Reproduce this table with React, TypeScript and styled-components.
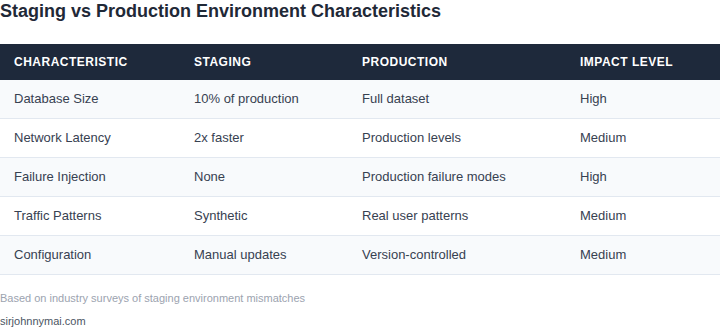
import React from "react";
import styled, { createGlobalStyle } from "styled-components";

const GlobalStyle = createGlobalStyle`
  body {
    margin: 0;
    background: #ffffff;
    font-family: "Liberation Sans", Arial, sans-serif;
  }
`;

const rows = [
  ["Database Size", "10% of production", "Full dataset", "High"],
  ["Network Latency", "2x faster", "Production levels", "Medium"],
  ["Failure Injection", "None", "Production failure modes", "High"],
  ["Traffic Patterns", "Synthetic", "Real user patterns", "Medium"],
  ["Configuration", "Manual updates", "Version-controlled", "Medium"],
];

const columns = [
  { label: "Characteristic", width: 180 },
  { label: "Staging", width: 168 },
  { label: "Production", width: 218 },
  { label: "Impact Level", width: 154 },
];

export default function App() {
  return (
    <>
      <GlobalStyle />
      <Wrapper>
        <Title>Staging vs Production Environment Characteristics</Title>
        <Table>
          <colgroup>
            {columns.map((c) => (
              <col key={c.label} style={{ width: c.width }} />
            ))}
          </colgroup>
          <thead>
            <tr>
              {columns.map((c) => (
                <Th key={c.label}>{c.label}</Th>
              ))}
            </tr>
          </thead>
          <tbody>
            {rows.map((row, i) => (
              <Tr key={row[0]} $alt={i % 2 === 0}>
                {row.map((cell, j) => (
                  <Td key={j}>{cell}</Td>
                ))}
              </Tr>
            ))}
          </tbody>
        </Table>
        <Note>Based on industry surveys of staging environment mismatches</Note>
        <Source>sirjohnnymai.com</Source>
      </Wrapper>
    </>
  );
}

const Wrapper = styled.div`
  width: 720px;
`;

const Title = styled.h1`
  margin: 0 0 22px;
  font-size: 18px;
  line-height: 22px;
  font-weight: 700;
  color: #1f2937;
`;

const Table = styled.table`
  width: 100%;
  border-collapse: collapse;
  table-layout: fixed;
`;

const Th = styled.th`
  background: #1e293b;
  color: #ffffff;
  text-align: left;
  font-size: 12px;
  line-height: 14px;
  font-weight: 700;
  text-transform: uppercase;
  letter-spacing: 0.5px;
  padding: 11px 14px;
`;

const Tr = styled.tr<{ $alt: boolean }>`
  background: ${({ $alt }) => ($alt ? "#f8fafc" : "#ffffff")};
  border-bottom: 1px solid #e2e8f0;
`;

const Td = styled.td`
  font-size: 13px;
  line-height: 14px;
  color: #374151;
  padding: 12px 14px;
`;

const Note = styled.p`
  margin: 17px 0 0;
  font-size: 11px;
  line-height: 13px;
  color: #9ca3af;
`;

const Source = styled.p`
  margin: 10px 0 0;
  font-size: 11px;
  line-height: 13px;
  color: #4b5563;
`;
